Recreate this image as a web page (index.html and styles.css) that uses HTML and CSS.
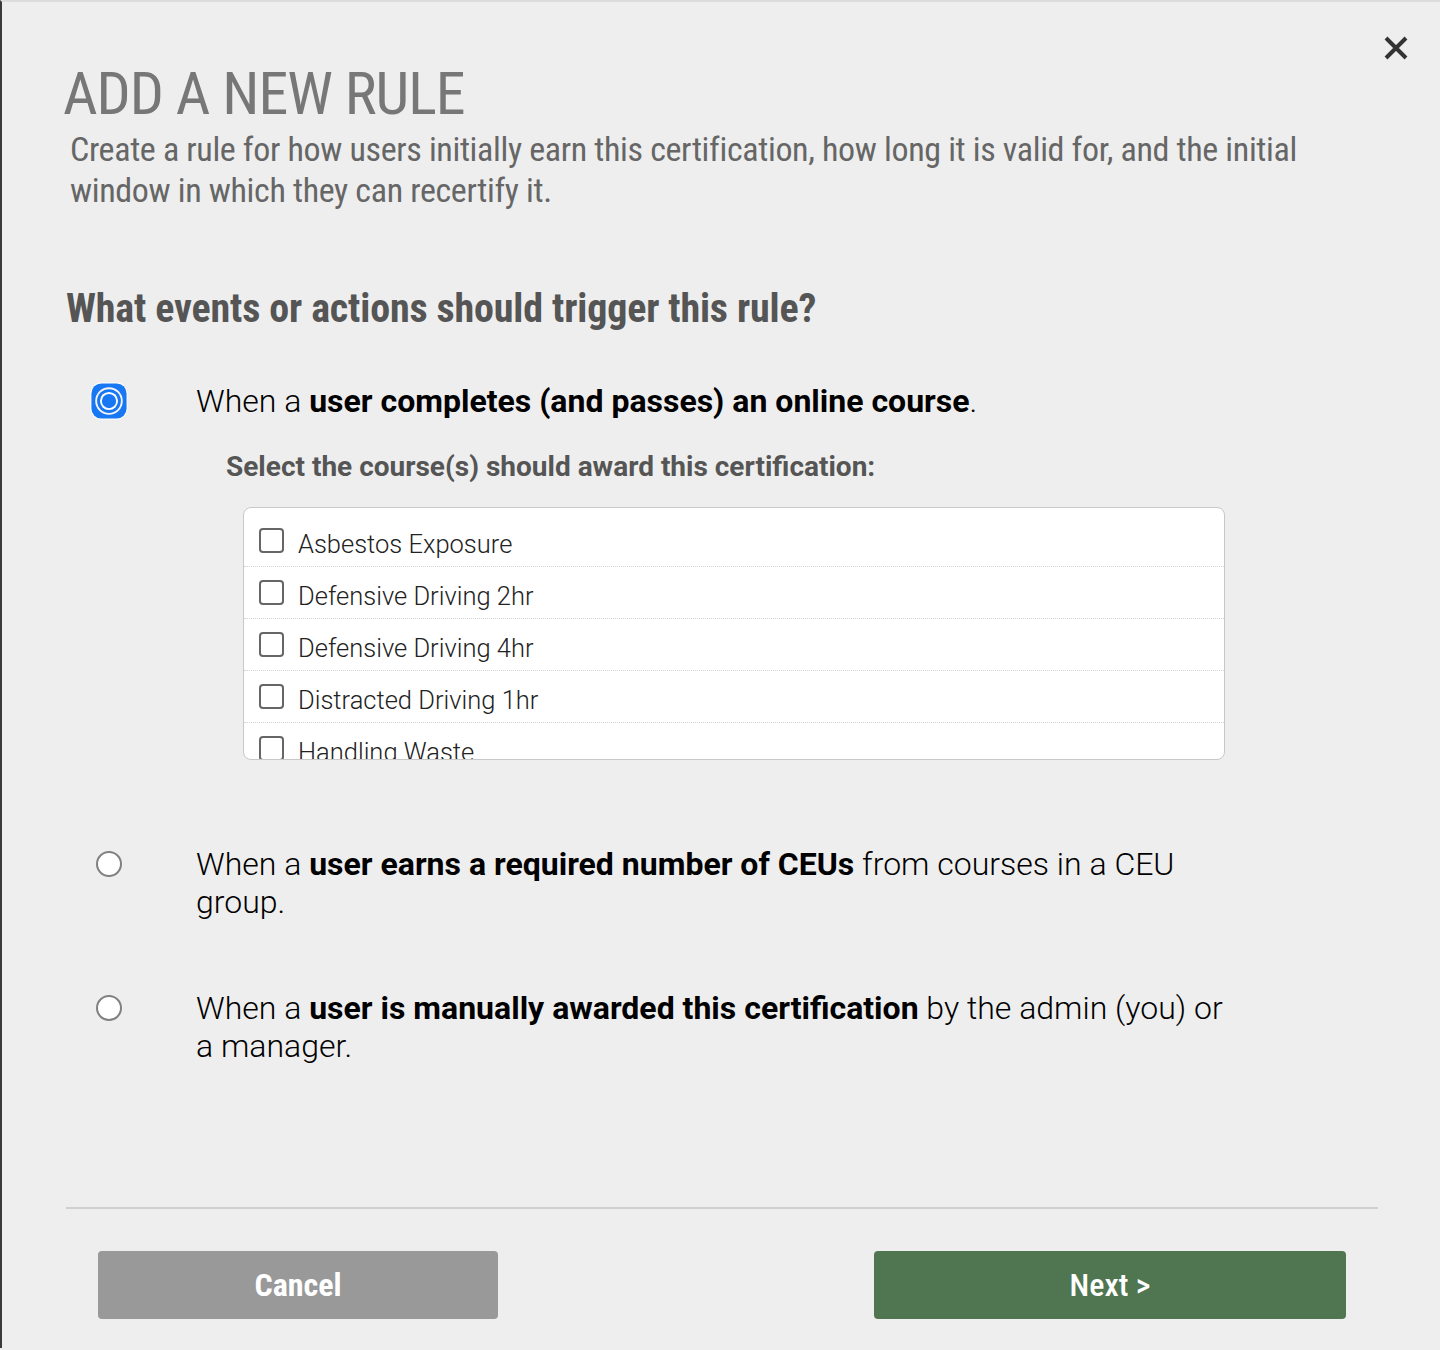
FILE: index.html
```html
<!DOCTYPE html>
<html lang="en">
<head>
  <meta charset="UTF-8">
  <meta name="viewport" content="width=device-width, initial-scale=1.0">
  <title>Add a new rule</title>
  <link rel="stylesheet" href="styles.css">
</head>
<body>
  <div class="modal">
    <button class="close" aria-label="Close">
      <svg width="26" height="26" viewBox="0 0 26 26"><path d="M3 3 L23 23 M23 3 L3 23" stroke="#333" stroke-width="4" fill="none"/></svg>
    </button>

    <h1 class="title">ADD A NEW RULE</h1>
    <p class="subtitle">Create a rule for how users initially earn this certification, how long it is valid for, and the initial window in which they can recertify it.</p>

    <h2 class="question">What events or actions should trigger this rule?</h2>

    <div class="options">
      <div class="option">
        <span class="radio selected">
          <svg width="40" height="40" viewBox="0 0 40 40">
            <rect x="0.5" y="0.5" width="39" height="39" rx="11.5" fill="#fff"/>
            <rect x="1.5" y="1.5" width="37" height="37" rx="10.5" fill="#1877f2"/>
            <circle cx="20" cy="20" r="14.5" fill="#f4f4f4"/>
            <circle cx="20" cy="20" r="12.5" fill="#1877f2"/>
            <circle cx="20" cy="20" r="9.5" fill="#fff"/>
            <circle cx="20" cy="20" r="7.5" fill="#1877f2"/>
          </svg>
        </span>
        <div class="option-body">
          <div class="option-text">When a <b>user completes (and passes) an online course</b>.</div>
          <div class="course-label">Select the course(s) should award this certification:</div>
          <div class="course-list">
            <label class="course"><span class="check"></span><span>Asbestos Exposure</span></label>
            <label class="course"><span class="check"></span><span>Defensive Driving 2hr</span></label>
            <label class="course"><span class="check"></span><span>Defensive Driving 4hr</span></label>
            <label class="course"><span class="check"></span><span>Distracted Driving 1hr</span></label>
            <label class="course"><span class="check"></span><span>Handling Waste</span></label>
          </div>
        </div>
      </div>

      <div class="option">
        <span class="radio"><span class="circle"></span></span>
        <div class="option-body">
          <div class="option-text">When a <b>user earns a required number of CEUs</b> from courses in a CEU group.</div>
        </div>
      </div>

      <div class="option">
        <span class="radio"><span class="circle"></span></span>
        <div class="option-body">
          <div class="option-text">When a <b>user is manually awarded this certification</b> by the admin (you) or a manager.</div>
        </div>
      </div>
    </div>

    <div class="footer">
      <button class="btn cancel">Cancel</button>
      <button class="btn next">Next &gt;</button>
    </div>
  </div>
</body>
</html>
```

FILE: styles.css
```css
body {
  margin: 0;
  background: #eeeeee;
  font-family: Roboto, "Liberation Sans", sans-serif;
}
.modal {
  position: relative;
  min-height: 1348px;
  border-top: 2px solid #dcdcdc;
  border-left: 2px solid #3a3a3a;
  box-sizing: border-box;
}
.close {
  position: absolute;
  top: 33px;
  right: 31px;
  padding: 0;
  border: none;
  background: none;
  width: 26px;
  height: 26px;
}
.title {
  margin: 61px 0 0 61px;
  font-family: "Roboto Condensed", "Liberation Sans Narrow", Roboto, sans-serif;
  font-stretch: condensed;
  font-weight: 400;
  font-size: 60px;
  line-height: 62px;
  letter-spacing: -1px;
  color: #777;
}
.subtitle {
  margin: 4px 0 0 68px;
  width: 1250px;
  font-family: "Roboto Condensed", "Liberation Sans Narrow", Roboto, sans-serif;
  font-stretch: condensed;
  font-size: 34px;
  line-height: 41px;
  letter-spacing: -0.35px;
  color: #666;
}
.question {
  margin: 75px 0 0 64px;
  font-family: "Roboto Condensed", "Liberation Sans Narrow", Roboto, sans-serif;
  font-stretch: condensed;
  font-weight: 700;
  font-size: 40px;
  line-height: 46px;
  letter-spacing: -0.15px;
  color: #555;
}
.options {
  margin-top: 50px;
  padding-left: 88px;
  display: flex;
  flex-direction: column;
  gap: 68px;
}
.option {
  display: flex;
  gap: 68px;
}
.radio {
  flex: none;
  width: 38px;
  height: 38px;
  display: flex;
  align-items: center;
  justify-content: center;
}
.circle {
  width: 22px;
  height: 22px;
  border: 2px solid #808080;
  border-radius: 50%;
  background: #fff;
}
.option-body {
  width: 1036px;
}
.option-text {
  font-size: 32px;
  line-height: 38px;
  font-weight: 300;
  color: #000;
}
.option-text b {
  font-weight: 700;
}
.course-label {
  margin: 31px 0 0 30px;
  font-size: 28px;
  line-height: 32px;
  font-weight: 700;
  color: #555;
}
.course-list {
  margin: 24px 0 17px 47px;
  width: 980px;
  height: 244px;
  background: #fff;
  border: 1px solid #c8c8c8;
  border-radius: 8px;
  padding-top: 7px;
  box-sizing: content-box;
  overflow: hidden;
}
.course {
  display: flex;
  align-items: center;
  gap: 14px;
  height: 51px;
  padding: 0 15px;
  border-bottom: 1px dotted #d4d4d4;
  font-size: 25.5px;
  font-weight: 300;
  color: #222;
}
.course span:last-child {
  margin-top: 7px;
}
.check {
  flex: none;
  width: 21px;
  height: 21px;
  border: 2px solid #666;
  border-radius: 4px;
  background: #fff;
}
.footer {
  position: absolute;
  left: 64px;
  right: 62px;
  top: 1205px;
  border-top: 2px solid #cfcfcf;
  padding: 42px 32px 0;
  display: flex;
  justify-content: space-between;
}
.btn {
  height: 68px;
  border: none;
  border-radius: 4px;
  color: #fff;
  font-family: "Roboto Condensed", "Liberation Sans Narrow", Roboto, sans-serif;
  font-stretch: condensed;
  font-size: 32px;
}
.cancel {
  width: 400px;
  background: #999;
  font-weight: 700;
}
.next {
  width: 472px;
  background: #507651;
  font-weight: 500;
}
```
